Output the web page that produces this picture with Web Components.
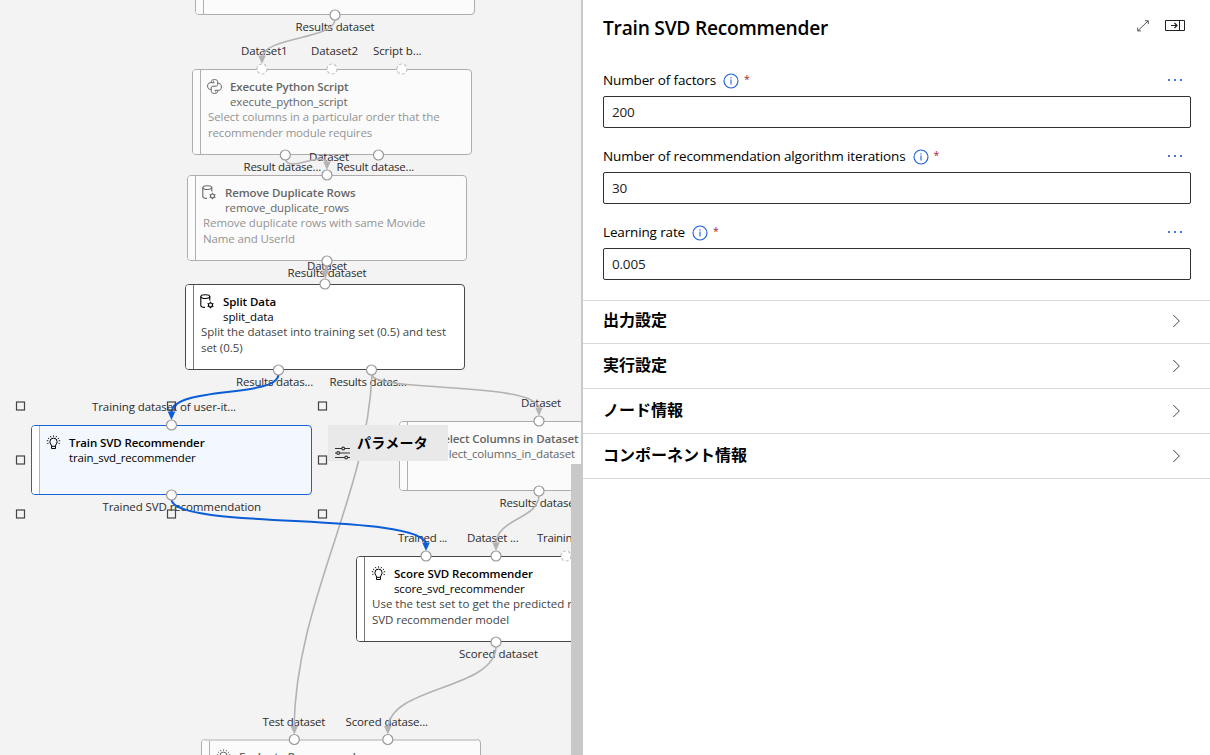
<!DOCTYPE html>
<html lang="ja">
<head>
<meta charset="utf-8">
<title>Designer</title>
<style>
    body {
        margin: 0;
        width: 1210px;
        height: 755px;
        overflow: hidden;
        background: #fff;
        color: #000;
        font-family: "Open Sans", "Noto Sans CJK JP", sans-serif;
    }
</style>
</head>
<body>
<designer-app></designer-app>

<script>
const ICONS = {
    bulb: `<svg width="15" height="15" viewBox="0 0 15 15" fill="none" stroke="currentColor" stroke-width="1">
        <path d="M5.5 11.2C5.5 9.3 3.9 8.8 3.9 6.7a3.6 3.6 0 0 1 7.2 0c0 2.1-1.6 2.6-1.6 4.5v2.3h-4zM5.5 11.3h4"/>
        <path d="M7.5.3v1.4M4.4 1l.6 1.3M10.6 1 10 2.3M2 3l1.2.9M13 3l-1.2.9M.8 5.6l1.5.3M14.2 5.6l-1.5.3M1.2 8.7l1.3-.5M13.8 8.7l-1.3-.5" stroke-width=".9"/></svg>`,
    data: `<svg width="15" height="15" viewBox="0 0 15 15" fill="none" stroke="currentColor" stroke-width="1.1">
        <ellipse cx="5.3" cy="2.6" rx="4.5" ry="1.9"/>
        <path d="M.8 2.6v9c0 1 1.8 1.8 4.2 1.8M9.8 2.6v4"/>
        <circle cx="10.5" cy="11" r="2"/>
        <path d="M10.5 7.7v1.2M10.5 13.1v1.2M7.6 9.4l1.1.6M12.3 12l1.1.6M7.6 12.6l1.1-.6M12.3 10l1.1-.6"/></svg>`,
    python: `<svg width="15" height="15" viewBox="0 0 15 15" fill="none" stroke="currentColor" stroke-width="1">
        <path d="M7.5 3.7H3.2C1.5 3.7.6 5 .6 7s.9 3.4 2.6 3.4h1V9c0-1.2.7-1.8 1.8-1.8h3c1 0 1.7-.7 1.7-1.7V2.6C10.7 1.3 9.6.6 7.5.6S4.3 1.3 4.3 2.5v1.2"/>
        <path d="M7.5 11.3h4.3c1.7 0 2.6-1.3 2.6-3.3s-.9-3.6-2.6-3.6h-1.1M4.3 10.4v2c0 1.3 1.1 2 3.2 2s3.2-.7 3.2-2v-1.1M6 2.3h1M8.2 12.8h1"/></svg>`,
    sliders: `<svg width="16" height="14" viewBox="0 0 16 14" fill="none" stroke="#333" stroke-width="1.1">
        <path d="M0 2.5h7M9.5 2.5H15M0 7h2M4.5 7H15M0 11.5h10M12.5 11.5H15"/>
        <circle cx="8.2" cy="2.5" r="1.4"/><circle cx="3.2" cy="7" r="1.4"/><circle cx="11.2" cy="11.5" r="1.4"/></svg>`,
    expand: `<svg width="12" height="12" viewBox="0 0 12 12" fill="none" stroke="#444" stroke-width=".9">
        <path d="M.9 10.8 11.1.9M8 .8h3.3v3.3M.7 7.6v3.3H4"/></svg>`,
    pane: `<svg width="20" height="12" viewBox="0 0 20 12" fill="none" stroke="#222" stroke-width="1">
        <path d="M.5.5h19v10H.5zM14.5.5v10"/><path d="M6 5.5h6M9.5 3 12 5.5 9.5 8" stroke-width="1.2"/></svg>`,
    info: `<svg width="16" height="16" viewBox="0 0 16 16" fill="none" stroke="#1b5fd9" stroke-width="1.1">
        <circle cx="8" cy="8" r="7"/><path d="M8 6.5v5M8 4.3v1.2"/></svg>`,
    more: `<svg width="16" height="4" viewBox="0 0 16 4" fill="#4a74d8">
        <path d="M1 1h2v2H1zM7 1h2v2H7zM13 1h2v2h-2z"/></svg>`,
    chevron: `<svg width="8" height="14" viewBox="0 0 8 14" fill="none" stroke="#444" stroke-width="1">
        <path d="M1.3 1 7.3 7 1.3 13"/></svg>`
};

// One line of text, tracked so that it takes up exactly the given width
class FitText extends HTMLElement {
    connectedCallback() {
        this.attachShadow({ mode: 'open' }).innerHTML = `
            <style>
                :host { display: block; white-space: nowrap; }
            </style>
            <span><slot></slot></span>
        `;
        const width = parseFloat(this.getAttribute('width'));
        if (width) {
            const span = this.shadowRoot.querySelector('span');
            const natural = span.getBoundingClientRect().width;
            const count = this.textContent.length;
            span.style.letterSpacing = ((width - natural) / count) + 'px';
        }
    }
}
customElements.define('fit-text', FitText);

class GraphNode extends HTMLElement {
    connectedCallback() {
        const get = (name) => this.getAttribute(name);
        const lines = JSON.parse(get('lines') || '[]');
        this.attachShadow({ mode: 'open' }).innerHTML = `
            <style>
                :host {
                    position: absolute;
                    box-sizing: border-box;
                    display: flex;
                    left: ${get('x')}px;
                    top: ${get('y')}px;
                    width: ${get('w') || 280}px;
                    height: ${get('h') || 86}px;
                    border: 1px solid #484848;
                    border-radius: 4px;
                    background: #fff;
                    overflow: hidden;
                    color: #000;
                    --desc: #444;
                    --stripe: #777;
                }
                :host([state="faded"]) {
                    border-color: #adadad;
                    background: #fbfbfb;
                    color: #666;
                    --desc: #949494;
                    --stripe: #b0b0b0;
                }
                :host([state="selected"]) {
                    border-color: #1565d8;
                    background: #f2f8fd;
                    --stripe: #b5b5b5;
                }
                .stripe { width: 7px; border-right: 1px solid var(--stripe); background: #fff; flex: none; }
                :host([state="faded"]) .stripe { background: #fbfbfb; }
                .body { padding: 9px 0 0 7px; font-size: 11.5px; line-height: 15px; }
                .head { display: flex; gap: 8px; }
                .icon { width: 15px; height: 15px; flex: none; margin-left: -1px; }
                .icon svg { display: block; }
                .title { font-weight: 600; }
                .desc { color: var(--desc); line-height: 16px; }
            </style>
            <div class="stripe"></div>
            <div class="body">
                <div class="head">
                    <div class="icon">${ICONS[get('icon')] || ''}</div>
                    <div>
                        <fit-text class="title" width="${get('title-w')}">${get('name') || ''}</fit-text>
                        <fit-text width="${get('sub-w')}">${get('sub') || ''}</fit-text>
                    </div>
                </div>
                <div class="desc">
                    ${lines.map(([text, w]) => `<fit-text width="${w}">${text}</fit-text>`).join('')}
                </div>
            </div>
        `;
    }
}
customElements.define('graph-node', GraphNode);

// Port caption; y is the text baseline
class PortLabel extends HTMLElement {
    connectedCallback() {
        this.attachShadow({ mode: 'open' }).innerHTML = `
            <style>
                :host {
                    position: absolute;
                    left: ${this.getAttribute('x')}px;
                    top: ${this.getAttribute('y') - 12}px;
                    font-size: 11.5px;
                    line-height: 16px;
                    color: #2c2c2c;
                }
            </style>
            <fit-text width="${this.getAttribute('w')}">${this.getAttribute('text')}</fit-text>
        `;
    }
}
customElements.define('port-label', PortLabel);

const NODES = [
    { x: 195, y: -71, state: 'faded' },
    { x: 192, y: 69, state: 'faded', icon: 'python', name: 'Execute Python Script', 'title-w': 118.5, sub: 'execute_python_script', 'sub-w': 117.5,
      lines: [['Select columns in a particular order that the', 231.5], ['recommender module requires', 164]] },
    { x: 187, y: 175, state: 'faded', icon: 'data', name: 'Remove Duplicate Rows', 'title-w': 130.5, sub: 'remove_duplicate_rows', 'sub-w': 124,
      lines: [['Remove duplicate rows with same Movide', 222.5], ['Name and UserId', 92]] },
    { x: 185, y: 284, icon: 'data', name: 'Split Data', 'title-w': 53, sub: 'split_data', 'sub-w': 50.5,
      lines: [['Split the dataset into training set (0.5) and test', 245], ['set (0.5)', 41.5]] },
    { x: 399, y: 421, h: 70, state: 'faded', icon: 'data', name: 'Select Columns in Dataset', 'title-w': 141.5, sub: 'select_columns_in_dataset', 'sub-w': 138 },
    { x: 31, y: 425, w: 281, h: 70, state: 'selected', icon: 'bulb', name: 'Train SVD Recommender', 'title-w': 135.5, sub: 'train_svd_recommender', 'sub-w': 126.5 },
    { x: 356, y: 556, icon: 'bulb', name: 'Score SVD Recommender', 'title-w': 139, sub: 'score_svd_recommender', 'sub-w': 130.5,
      lines: [['Use the test set to get the predicted r', 200], ['SVD recommender model', 137]] },
    { x: 201, y: 739, state: 'faded', icon: 'bulb', name: 'Evaluate Recommender', 'title-w': 128 }
];

// text, x, baseline, width
const LABELS = [
    ['Results dataset', 295.5, 31, 79],
    ['Dataset1', 241, 55, 46.5], ['Dataset2', 311, 55, 47], ['Script b...', 373, 55, 48.5],
    ['Dataset', 309, 161, 40], ['Result datase...', 243.5, 171, 77.5], ['Result datase...', 336.5, 171, 77.5],
    ['Dataset', 307, 270, 40], ['Results dataset', 287.5, 277, 79],
    ['Results datas...', 236, 386, 77], ['Results datas...', 329.5, 386, 77],
    ['Training dataset of user-it...', 92, 411, 144], ['Trained SVD recommendation', 102.5, 511, 158.5],
    ['Dataset', 521, 407, 40], ['Results dataset', 499.5, 507, 79],
    ['Trained ...', 398, 542, 49], ['Dataset ...', 467, 542, 51.5], ['Training ...', 537, 542, 52],
    ['Scored dataset', 459, 658, 79],
    ['Test dataset', 262.5, 726, 62.5], ['Scored datase...', 345.5, 726, 82.5]
];

// x, y, dashed
const PORTS = [
    [335, 15], [262, 69, 1], [332, 69, 1], [402, 69, 1], [285.3, 155], [378.5, 155],
    [327, 175], [327, 261], [325, 284], [278.5, 370], [371.5, 370],
    [171.5, 425], [171.5, 495], [539, 421], [539, 491],
    [426, 556], [496, 556], [566, 556, 1], [496, 642], [294.3, 739.5], [387.8, 739.5]
];

const EDGES = [
    { d: 'M335 20C333 40 264 36 262 58', tip: [262, 64] },
    { d: 'M285.5 160C289 168 302 162 313 160S327 160 327 164', tip: [327, 170] },
    { d: 'M327 266L325 275', tip: [325.3, 279], w: 3 },
    { d: 'M372 375C366 500 296 600 294 728', tip: [294.3, 734.5] },
    { d: 'M372 375C376 392 536 382 539 408', tip: [539, 416] },
    { d: 'M539 496C537 520 497 518 496 544', tip: [496, 551] },
    { d: 'M496 647C494 690 390 686 388 728', tip: [387.8, 734.5] },
    { d: 'M278.5 375C276 398 174 386 171.5 412', tip: [171.5, 420], blue: true },
    { d: 'M171.5 500C176 530 420 512 426 544', tip: [426, 551], blue: true }
];

class PipelineCanvas extends HTMLElement {
    connectedCallback() {
        const attrs = (o) => Object.entries(o).map(([k, v]) =>
            `${k}='${k === 'lines' ? JSON.stringify(v) : v}'`).join(' ');
        const edge = (e) => {
            const color = e.blue ? '#0a5cd7' : '#b3b3b3';
            const [x, y] = e.tip;
            return `<path d="${e.d}" fill="none" stroke="${color}" stroke-width="${e.w || (e.blue ? 2 : 1.6)}"/>
                <path d="M${x - 3.8} ${y - 8.5}h7.6L${x} ${y}z" fill="${color}"/>`;
        };
        const handles = [406, 460, 514].flatMap((y) => [20.5, 171.5, 322.5]
            .filter((x) => !(y === 460 && x === 171.5))
            .map((x) => `<rect x="${x - 4}" y="${y - 4}" width="8" height="8"/>`));

        this.attachShadow({ mode: 'open' }).innerHTML = `
            <style>
                :host { display: block; position: relative; overflow: hidden; background: #f3f3f3; }
                .overlay { position: absolute; left: 0; top: 0; }
                .tool {
                    position: absolute;
                    left: 328px;
                    top: 425px;
                    width: 120px;
                    height: 36px;
                    box-sizing: border-box;
                    padding-left: 7px;
                    display: flex;
                    gap: 6px;
                    background: #e9e9e9;
                    font: 700 14px/34px "Noto Sans CJK JP", sans-serif;
                }
                .tool svg { margin-top: 21px; }
                .scroll { position: absolute; right: 1px; top: 464px; bottom: 0; width: 10px; background: #c8c8c8; }
            </style>
            ${NODES.map((n) => `<graph-node ${attrs(n)}></graph-node>`).join('')}
            ${LABELS.map(([text, x, y, w]) => `<port-label text="${text}" x="${x}" y="${y}" w="${w}"></port-label>`).join('')}
            <svg class="overlay" width="582" height="755">
                <path d="M205 740h272" stroke="#d3d3d3" stroke-width="2"/>
                ${EDGES.map(edge).join('')}
                ${PORTS.map(([x, y, dashed]) => `<circle cx="${x}" cy="${y}" r="5" fill="#fff"
                    stroke="${dashed ? '#c4c4c4' : '#999'}" stroke-width="1.2" ${dashed ? 'stroke-dasharray="3 2"' : ''}/>`).join('')}
                <g fill="none" stroke="#444" stroke-width="1.2">${handles.join('')}</g>
            </svg>
            <div class="tool">${ICONS.sliders}<fit-text width="71">パラメータ</fit-text></div>
            <div class="scroll"></div>
        `;
    }
}
customElements.define('pipeline-canvas', PipelineCanvas);

class ParamField extends HTMLElement {
    connectedCallback() {
        this.attachShadow({ mode: 'open' }).innerHTML = `
            <style>
                :host { display: block; height: 76px; }
                .row { display: flex; height: 25px; align-items: flex-start; font-size: 13.5px; line-height: 18px; }
                .info { margin: 2px 0 0 7px; height: 16px; }
                svg { display: block; }
                .star { color: #a4262c; margin-left: 5px; font-size: 10.5px; line-height: 16px; }
                .more { margin: 7px 8px 0 auto; }
                input {
                    display: block;
                    box-sizing: border-box;
                    width: 588px;
                    height: 32px;
                    padding: 0 8px;
                    border: 1px solid #323130;
                    border-radius: 2px;
                    font: 13.5px "Open Sans", sans-serif;
                    letter-spacing: -.2px;
                    color: #222;
                }
            </style>
            <div class="row">
                <fit-text width="${this.getAttribute('label-w')}">${this.getAttribute('label')}</fit-text>
                <div class="info">${ICONS.info}</div>
                <span class="star">*</span>
                <div class="more">${ICONS.more}</div>
            </div>
            <input value="${this.getAttribute('value')}">
        `;
    }
}
customElements.define('param-field', ParamField);

class PanelSection extends HTMLElement {
    connectedCallback() {
        this.attachShadow({ mode: 'open' }).innerHTML = `
            <style>
                :host {
                    box-sizing: border-box;
                    display: flex;
                    justify-content: space-between;
                    align-items: center;
                    height: 45px;
                    padding: 0 30px 4px 20px;
                    border-bottom: 1px solid #d8d8d8;
                    font: 700 16px/24px "Noto Sans CJK JP", sans-serif;
                }
                :host(:first-of-type) { height: 43px; padding-bottom: 6px; }
                svg { display: block; margin-top: 4px; }
            </style>
            <slot></slot>
            ${ICONS.chevron}
        `;
    }
}
customElements.define('panel-section', PanelSection);

class SettingsPanel extends HTMLElement {
    connectedCallback() {
        this.attachShadow({ mode: 'open' }).innerHTML = `
            <style>
                :host { display: block; background: #fff; border-left: 2px solid #c9c9c9; }
                header { display: flex; height: 70px; padding: 14px 25px 0 20px; box-sizing: border-box; }
                h2 { margin: 0; font-size: 19.2px; font-weight: 600; line-height: 28px; flex: 1; }
                header svg { display: block; margin: 6px 0 0 16px; }
                .fields { padding: 1px 19px 0 20px; height: 230px; box-sizing: border-box; }
                .sections { border-top: 1px solid #d8d8d8; }
            </style>
            <header>
                <h2><fit-text width="225">Train SVD Recommender</fit-text></h2>
                ${ICONS.expand}
                ${ICONS.pane}
            </header>
            <div class="fields">
                <param-field label="Number of factors" label-w="113" value="200"></param-field>
                <param-field label="Number of recommendation algorithm iterations" label-w="302.5" value="30"></param-field>
                <param-field label="Learning rate" label-w="82" value="0.005"></param-field>
            </div>
            <div class="sections">
                <panel-section>出力設定</panel-section>
                <panel-section>実行設定</panel-section>
                <panel-section>ノード情報</panel-section>
                <panel-section>コンポーネント情報</panel-section>
            </div>
        `;
    }
}
customElements.define('settings-panel', SettingsPanel);

class DesignerApp extends HTMLElement {
    connectedCallback() {
        this.attachShadow({ mode: 'open' }).innerHTML = `
            <style>
                :host { display: grid; grid-template-columns: 582px 1fr; height: 755px; }
                settings-panel { margin-left: -1px; position: relative; }
            </style>
            <pipeline-canvas></pipeline-canvas>
            <settings-panel></settings-panel>
        `;
    }
}
customElements.define('designer-app', DesignerApp);
</script>
</body>
</html>
